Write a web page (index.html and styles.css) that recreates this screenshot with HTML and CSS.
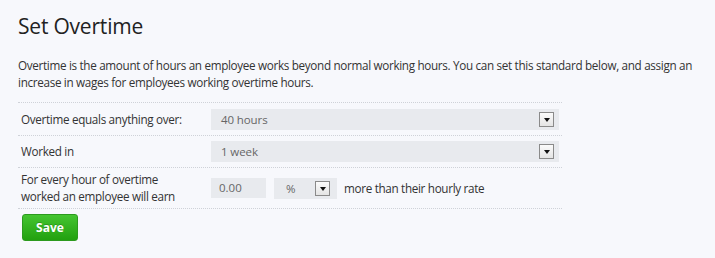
FILE: index.html
```html
<!DOCTYPE html>
<html>
<head>
<meta charset="utf-8">
<link rel="stylesheet" href="styles.css">
</head>
<body>
<div class="page">
  <h1 class="title">Set Overtime</h1>
  <p class="desc">Overtime is the amount of hours an employee works beyond normal working hours. You can set this standard below, and assign an increase in wages for employees working overtime hours.</p>
  <div class="form">
    <div class="row r1">
      <div class="label">Overtime equals anything over:</div>
      <div class="field">
        <div class="select wide"><span class="val">40 hours</span><span class="btn"><span class="arrow"></span></span></div>
      </div>
    </div>
    <div class="row r2">
      <div class="label">Worked in</div>
      <div class="field">
        <div class="select wide"><span class="val">1 week</span><span class="btn"><span class="arrow"></span></span></div>
      </div>
    </div>
    <div class="row r3">
      <div class="label">For every hour of overtime<br>worked an employee will earn</div>
      <div class="field">
        <div class="input">0.00</div>
        <div class="select small"><span class="val">%</span><span class="btn"><span class="arrow"></span></span></div>
        <span class="suffix">more than their hourly rate</span>
      </div>
    </div>
  </div>
  <button class="save">Save</button>
</div>
</body>
</html>
```
FILE: styles.css
```css
html, body {
  margin: 0;
  padding: 0;
  background: #f7f8fc;
}
body {
  font-family: "Open Sans", "Noto Sans", sans-serif;
  color: #333;
  width: 715px;
  height: 258px;
  overflow: hidden;
}
.page {
  padding: 12px 0 0 18px;
}
.title {
  margin: 0;
  font-weight: 400;
  font-size: 21px;
  line-height: 28px;
  color: #222;
  letter-spacing: -0.2px;
}
.desc {
  margin: 17px 0 0 0;
  font-size: 11.7px;
  letter-spacing: -0.32px;
  line-height: 17px;
  color: #333;
  width: 685px;
}
.form {
  margin-top: 11px;
  width: 544px;
  border-top: 1px dotted #cfd2d8;
}
.row {
  display: flex;
  align-items: center;
  border-bottom: 1px dotted #cfd2d8;
}
.r1 { height: 32px; }
.r2 { height: 31px; }
.r3 { height: 40px; }
.label {
  width: 190px;
  padding-left: 3px;
  font-size: 11.7px;
  letter-spacing: -0.32px;
  line-height: 17px;
  color: #333;
}
.field {
  display: flex;
  align-items: center;
}
.select {
  display: flex;
  align-items: center;
  justify-content: space-between;
  height: 21px;
  background: #e8eaee;
  box-sizing: border-box;
  padding: 0 5px 0 10px;
  font-size: 11.5px;
  letter-spacing: -0.1px;
  color: #666;
}
.select.wide {
  width: 348px;
}
.select.small {
  width: 63px;
  margin-left: 8px;
  padding-left: 12px;
  padding-right: 7px;
}
.btn {
  width: 15px;
  height: 15px;
  box-sizing: border-box;
  border: 1px solid #8a8a8a;
  background: linear-gradient(#fbfbfb, #e4e4e4);
  display: flex;
  align-items: center;
  justify-content: center;
}
.arrow {
  width: 0;
  height: 0;
  border-left: 3px solid transparent;
  border-right: 3px solid transparent;
  border-top: 4px solid #111;
  margin-top: 1px;
}
.input {
  width: 55px;
  height: 20px;
  box-sizing: border-box;
  background: #e8eaee;
  padding-left: 8px;
  font-size: 11.5px;
  line-height: 20px;
  color: #666;
}
.suffix {
  margin-left: 7px;
  font-size: 11.7px;
  letter-spacing: -0.32px;
  color: #333;
}
.save {
  margin: 5px 0 0 4px;
  width: 56px;
  height: 27px;
  border: 1px solid #2c9a1e;
  border-radius: 3px;
  background: linear-gradient(#45c531, #22a00f);
  color: #fff;
  font-family: "Open Sans", sans-serif;
  font-weight: 700;
  font-size: 12px;
  padding: 0;
  text-shadow: 0 -1px 0 rgba(0,0,0,0.2);
}
```
